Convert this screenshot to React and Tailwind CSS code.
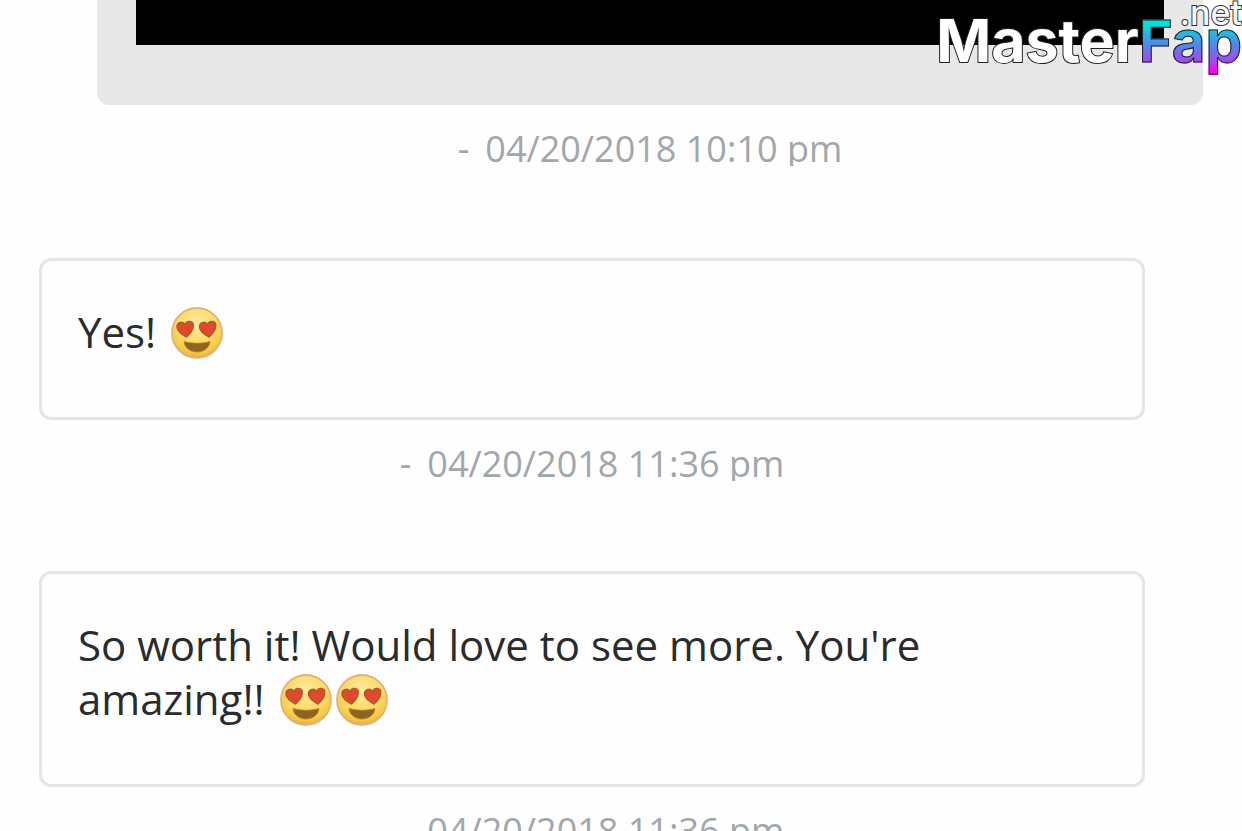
function HeartEyes() {
  return (
    <svg viewBox="0 0 52 52" role="img" aria-label="Smiling face with heart eyes" className="ml-1 inline-block size-[52px] align-[-11px]">
      <defs>
        <radialGradient id="face" cx="50%" cy="32%" r="68%">
          <stop offset="0" stopColor="#fdeaa2" />
          <stop offset="0.55" stopColor="#fadb68" />
          <stop offset="0.85" stopColor="#f5c945" />
          <stop offset="1" stopColor="#e6ab48" />
        </radialGradient>
      </defs>
      <circle cx="26" cy="26" r="25" fill="url(#face)" stroke="#dfb47a" strokeWidth="1.8" />
      <g fill="#dd4b2c" stroke="#b1582c" strokeWidth="1.4">
        <path d="M15.500 30C10.500 27.500 6.500 24.500 6 20.500C5.500 15.500 11.500 13.500 14 17.500C15.500 13 22.500 13.500 22.300 18.500C22.200 23 19 27 15.500 30Z" />
        <path d="M38 30C33 27.500 29 24.500 28.500 20.500C28 15.500 34 13.500 36.500 17.500C38 13 45 13.500 44.800 18.500C44.700 23 41.500 27 38 30Z" />
      </g>
      <path d="M13 34.500C20 36.800 32 36.800 39 34.500C38.500 41 32.500 45 26 45C19.500 45 13.500 41 13 34.500Z" fill="#8f6420" stroke="#b98322" strokeWidth="0.8" />
    </svg>
  );
}

function Timestamp({ children }) {
  return (
    <p className="mt-6 flex h-[37px] items-start justify-center overflow-hidden text-4xl leading-[40px] text-[#a1a7aa]">
      <span className="mr-4">-</span>
      <time>{children}</time>
    </p>
  );
}

function Message({ time, children }) {
  return (
    <article className="mb-[90px] pr-[97px] pl-[39px]">
      <div className="rounded-xl border-3 border-[#e5e5e8] px-9 pt-[44px] pb-[58px] text-[42px] leading-[54px] text-[#292b2c]">
        {children}
      </div>
      <Timestamp>{time}</Timestamp>
    </article>
  );
}

function Watermark() {
  return (
    <div className="absolute top-0 right-0 flex items-baseline font-['Inter',sans-serif] text-[59px] leading-[82px] font-bold [paint-order:stroke_fill]">
      <span className="text-white [-webkit-text-stroke:2px_#222]">Master</span>
      <span className="bg-[linear-gradient(to_bottom,#00e5d5_28%,#4a8fe8_52%,#9f4df0_74%,#ff00ff_86%)] bg-clip-text text-[58px] text-transparent [-webkit-text-stroke:1px_#222]">Fap</span>
      <span className="absolute top-0 right-0 text-[34px] leading-[26px] font-medium text-[#f7f7f7] [-webkit-text-stroke:2px_#333]">.net</span>
    </div>
  );
}

export default function App() {
  return (
    <main className="relative h-screen overflow-hidden bg-[#fefefe] font-['Open_Sans',sans-serif]">
      <article className="mb-[92px] pr-[39px] pl-[97px]">
        <div className="rounded-b-xl bg-[#e8e8e9] px-[39px] pb-[60px]">
          <div className="h-[45px] bg-black" />
        </div>
        <Timestamp>04/20/2018 10:10 pm</Timestamp>
      </article>
      <Message time="04/20/2018 11:36 pm">
        Yes! <HeartEyes />
      </Message>
      <Message time="04/20/2018 11:36 pm">
        So worth it! Would love to see more. You're amazing!! <span className="whitespace-nowrap"><HeartEyes /><HeartEyes /></span>
      </Message>
      <Watermark />
    </main>
  );
}
